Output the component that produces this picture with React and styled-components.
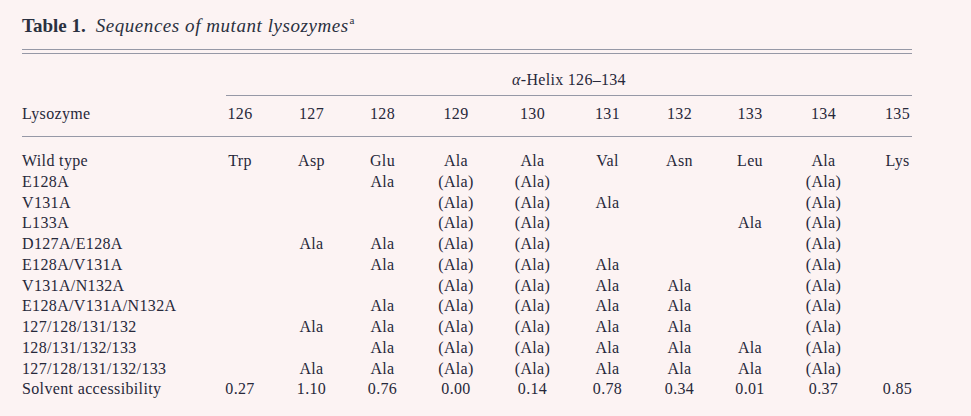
import React from "react";
import styled, { createGlobalStyle } from "styled-components";

const Global = createGlobalStyle`
  html, body { margin: 0; padding: 0; background: #fcf3f3; }
  body { font-family: "Liberation Serif", "Times New Roman", serif; color: #27283a; }
`;

const Page = styled.div`
  width: 971px;
  height: 416px;
  padding: 15px 0 0 22px;
  box-sizing: border-box;
  background: #fcf3f3;
  overflow: hidden;
`;

const Title = styled.div`
  font-size: 19px;
  line-height: 22px;
  color: #2a3040;
  white-space: nowrap;
`;

const TitleLabel = styled.b`
  font-weight: bold;
  margin-right: 10px;
`;

const TitleText = styled.i`
  letter-spacing: 0.55px;
`;

const Sup = styled.sup`
  font-size: 11px;
  font-style: normal;
  vertical-align: 8px;
  line-height: 0;
  margin-left: 1px;
`;

const DoubleRule = styled.div`
  width: 890px;
  height: 3px;
  margin-top: 12px;
  border-top: 1px solid #9698a6;
  border-bottom: 1px solid #9698a6;
`;

const SpanHead = styled.div`
  margin-left: 204px;
  width: 686px;
  margin-top: 15px;
  padding-bottom: 5px;
  border-bottom: 1px solid #9698a6;
  text-align: center;
  font-size: 16px;
  line-height: 21px;
  letter-spacing: 0.3px;
`;

const Grid = styled.div`
  display: grid;
  width: 911px;
  grid-template-columns: 182px 72px 71px 71px 76px 77px 73px 71px 70px 77px 71px;
  font-size: 16px;
  line-height: ${(p) => p.$lh || "20.75px"};
  letter-spacing: 0.35px;
  padding-top: ${(p) => p.$pt || "0px"};
  padding-bottom: ${(p) => p.$pb || "0px"};
`;

const HeaderGrid = styled(Grid)`
  position: relative;
  &::after {
    content: "";
    position: absolute;
    left: 0;
    bottom: 0;
    width: 890px;
    border-bottom: 1px solid #9698a6;
  }
`;

const Label = styled.div`
  white-space: nowrap;
`;

const Cell = styled.div`
  text-align: center;
  white-space: nowrap;
`;

const cols = ["126", "127", "128", "129", "130", "131", "132", "133", "134", "135"];

const rows = [
  ["Wild type", ["Trp", "Asp", "Glu", "Ala", "Ala", "Val", "Asn", "Leu", "Ala", "Lys"]],
  ["E128A", ["", "", "Ala", "(Ala)", "(Ala)", "", "", "", "(Ala)", ""]],
  ["V131A", ["", "", "", "(Ala)", "(Ala)", "Ala", "", "", "(Ala)", ""]],
  ["L133A", ["", "", "", "(Ala)", "(Ala)", "", "", "Ala", "(Ala)", ""]],
  ["D127A/E128A", ["", "Ala", "Ala", "(Ala)", "(Ala)", "", "", "", "(Ala)", ""]],
  ["E128A/V131A", ["", "", "Ala", "(Ala)", "(Ala)", "Ala", "", "", "(Ala)", ""]],
  ["V131A/N132A", ["", "", "", "(Ala)", "(Ala)", "Ala", "Ala", "", "(Ala)", ""]],
  ["E128A/V131A/N132A", ["", "", "Ala", "(Ala)", "(Ala)", "Ala", "Ala", "", "(Ala)", ""]],
  ["127/128/131/132", ["", "Ala", "Ala", "(Ala)", "(Ala)", "Ala", "Ala", "", "(Ala)", ""]],
  ["128/131/132/133", ["", "", "Ala", "(Ala)", "(Ala)", "Ala", "Ala", "Ala", "(Ala)", ""]],
  ["127/128/131/132/133", ["", "Ala", "Ala", "(Ala)", "(Ala)", "Ala", "Ala", "Ala", "(Ala)", ""]],
  ["Solvent accessibility", ["0.27", "1.10", "0.76", "0.00", "0.14", "0.78", "0.34", "0.01", "0.37", "0.85"]],
];

export default function App() {
  return (
    <>
      <Global />
      <Page>
        <Title>
          <TitleLabel>Table 1.</TitleLabel>
          <TitleText>Sequences of mutant lysozymes</TitleText>
          <Sup>a</Sup>
        </Title>
        <DoubleRule />
        <SpanHead>
          <i>α</i>-Helix 126–134
        </SpanHead>
        <HeaderGrid $lh="21px" $pt="7px" $pb="13px">
          <Label>Lysozyme</Label>
          {cols.map((c) => (
            <Cell key={c}>{c}</Cell>
          ))}
        </HeaderGrid>
        <Grid $pt="14px">
          {rows.map(([name, vals]) => (
            <React.Fragment key={name}>
              <Label>{name}</Label>
              {vals.map((v, i) => (
                <Cell key={i}>{v}</Cell>
              ))}
            </React.Fragment>
          ))}
        </Grid>
      </Page>
    </>
  );
}
